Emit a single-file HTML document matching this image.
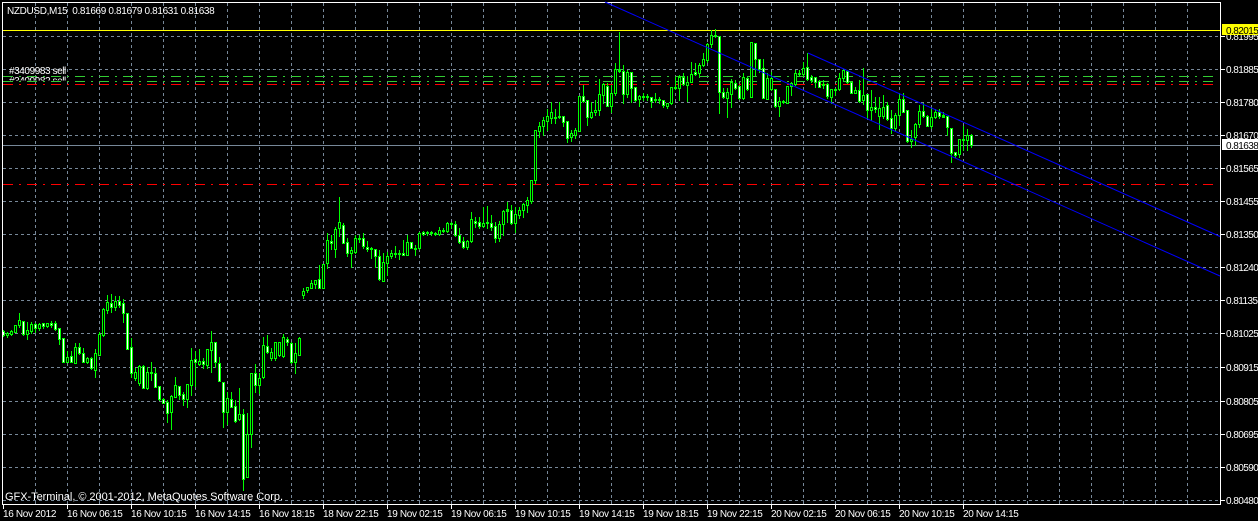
<!DOCTYPE html>
<html><head><meta charset="utf-8"><title>NZDUSD,M15</title>
<style>
html,body{margin:0;padding:0;background:#000;width:1258px;height:521px;overflow:hidden}
svg{display:block;position:absolute;left:0;top:0}
text{font-family:"Liberation Sans",sans-serif;fill:#fff;font-size:10px}
.r text,text.r{letter-spacing:-.56px}
.b text{letter-spacing:-.33px}
</style></head><body>
<svg width="1258" height="521" viewBox="0 0 1258 521" xmlns="http://www.w3.org/2000/svg">
<defs><clipPath id="c1"><rect x="0" y="76.5" width="80" height="4"/></clipPath><clipPath id="c2"><rect x="1222" y="35" width="36" height="8"/></clipPath></defs>
<rect width="1258" height="521" fill="#000"/>
<g shape-rendering="crispEdges" fill="none">
<path stroke="#778899" stroke-dasharray="3 3" d="M35.5 3V504M67.5 3V504M99.5 3V504M131.5 3V504M163.5 3V504M195.5 3V504M227.5 3V504M259.5 3V504M291.5 3V504M323.5 3V504M355.5 3V504M387.5 3V504M419.5 3V504M451.5 3V504M483.5 3V504M515.5 3V504M547.5 3V504M579.5 3V504M611.5 3V504M643.5 3V504M675.5 3V504M707.5 3V504M739.5 3V504M771.5 3V504M803.5 3V504M835.5 3V504M867.5 3V504M899.5 3V504M931.5 3V504M963.5 3V504M995.5 3V504M1027.5 3V504M1059.5 3V504M1091.5 3V504M1123.5 3V504M1155.5 3V504M1187.5 3V504"/>
<path stroke="#778899" stroke-dasharray="3 3" d="M3 36.5H1220M3 69.5H1220M3 102.5H1220M3 135.5H1220M3 168.5H1220M3 201.5H1220M3 234.5H1220M3 267.5H1220M3 300.5H1220M3 333.5H1220M3 367.5H1220M3 401.5H1220M3 434.5H1220M3 467.5H1220M3 500.5H1220"/>
<path stroke="#32cd32" stroke-dasharray="10 6 2 6" d="M3 76.5H1214M3 81.5H1214"/>
<path stroke="#ff0000" stroke-dasharray="10 6 2 6" d="M3 84.5H1214M3 184.5H1214"/>
<path stroke="#778899" d="M3 145.5H1220"/>
<path stroke="#ffff00" d="M3 30.5H1220"/>
<path stroke="#00ff00" d="M3.5 330V337M7.5 332V338M11.5 330V336M15.5 325V333M19.5 313V328M23.5 321V336M27.5 322V340M31.5 322V334M35.5 323V333M39.5 323V331M43.5 323V329M47.5 323V328M51.5 321V328M55.5 321V331M59.5 328V345M63.5 338V363M67.5 351V363M71.5 351V363M75.5 343V364M79.5 343V355M83.5 348V363M87.5 357V364M91.5 357V370M95.5 349V378M99.5 332V356M103.5 308V337M107.5 295V314M111.5 294V313M115.5 296V311M119.5 296V308M123.5 299V323M127.5 313V350M131.5 338V378M135.5 368V381M139.5 365V386M143.5 365V389M147.5 367V390M151.5 362V381M155.5 368V388M159.5 386V401M163.5 398V404M167.5 400V423M171.5 395V430M175.5 377V398M179.5 386V400M183.5 392V406M187.5 384V408M191.5 348V396M195.5 351V387M199.5 349V366M203.5 358V369M207.5 349V369M211.5 331V373M215.5 342V368M219.5 357V382M223.5 382V428M227.5 392V425M231.5 392V408M235.5 400V423M239.5 388V421M243.5 409V491M247.5 413V478M251.5 373V448M255.5 364V393M259.5 373V394M263.5 337V379M267.5 335V354M271.5 348V361M275.5 342V361M279.5 342V357M283.5 334V358M287.5 337V346M291.5 342V364M295.5 343V374M299.5 337V356M303.5 288V299M307.5 287V293M311.5 280V289M315.5 280V289M319.5 265V289M323.5 264V289M327.5 233V269M331.5 235V250M335.5 227V258M339.5 197V237M343.5 223V244M347.5 238V257M351.5 247V268M355.5 235V254M359.5 235V243M363.5 233V249M367.5 241V252M371.5 247V259M375.5 249V268M379.5 250V281M383.5 253V282M387.5 252V276M391.5 250V259M395.5 246V258M399.5 250V260M403.5 240V256M407.5 235V256M411.5 242V249M415.5 245V256M419.5 232V250M423.5 231V236M427.5 231V236M431.5 231V236M435.5 232V236M439.5 227V236M443.5 228V233M447.5 222V233M451.5 222V229M455.5 221V237M459.5 228V244M463.5 237V249M467.5 240V250M471.5 212V243M475.5 217V228M479.5 217V229M483.5 207V228M487.5 206V229M491.5 215V231M495.5 222V243M499.5 221V242M503.5 210V236M507.5 202V223M511.5 205V225M515.5 207V233M519.5 207V219M523.5 203V218M527.5 197V213M531.5 180V204M535.5 130V184M539.5 122V138M543.5 117V136M547.5 109V131M551.5 102V124M555.5 109V124M559.5 102V119M563.5 116V127M567.5 121V143M571.5 130V142M575.5 128V139M579.5 96V132M583.5 85V103M587.5 100V126M591.5 102V119M595.5 100V116M599.5 79V116M603.5 83V104M607.5 83V107M611.5 85V113M615.5 63V96M619.5 32V73M623.5 65V104M627.5 70V98M631.5 72V103M635.5 87V102M639.5 95V107M643.5 93V101M647.5 94V101M651.5 97V108M655.5 93V103M659.5 97V104M663.5 100V108M667.5 103V109M671.5 87V105M675.5 77V90M679.5 75V101M683.5 73V86M687.5 76V102M691.5 62V83M695.5 63V76M699.5 63V78M703.5 53V67M707.5 43V63M711.5 30V48M715.5 29V38M719.5 36V114M723.5 88V99M727.5 88V118M731.5 79V108M735.5 80V90M739.5 85V100M743.5 73V100M747.5 77V91M751.5 42V98M755.5 43V76M759.5 59V73M763.5 59V99M767.5 73V100M771.5 72V91M775.5 89V108M779.5 97V117M783.5 100V104M787.5 86V104M791.5 82V96M795.5 70V86M799.5 70V77M803.5 62V76M807.5 53V81M811.5 75V83M815.5 77V88M819.5 80V88M823.5 80V89M827.5 83V99M831.5 89V104M835.5 88V96M839.5 73V91M843.5 69V81M847.5 70V84M851.5 82V94M855.5 87V94M859.5 80V103M863.5 68V105M867.5 94V119M871.5 90V121M875.5 97V113M879.5 97V130M883.5 95V119M887.5 102V121M891.5 110V134M895.5 113V131M899.5 93V126M903.5 93V113M907.5 110V143M911.5 130V148M915.5 123V146M919.5 105V128M923.5 103V118M927.5 115V127M931.5 108V129M935.5 109V119M939.5 109V119M943.5 112V118M947.5 116V136M951.5 128V163M955.5 152V158M959.5 139V158M963.5 126V151M967.5 129V151M971.5 134V148"/>
<path stroke="#00ff00" stroke-width="3" d="M3.5 331V336M7.5 333V336M11.5 331V335M15.5 325V333M19.5 320V326M23.5 321V335M27.5 330V335M31.5 324V332M35.5 324V329M39.5 324V329M43.5 323V327M47.5 323V327M51.5 323V326M55.5 323V330M59.5 328V340M63.5 338V363M67.5 357V363M71.5 356V363M75.5 347V364M79.5 347V354M83.5 353V363M87.5 358V363M91.5 358V369M95.5 353V371M99.5 334V356M103.5 309V336M107.5 302V311M111.5 303V308M115.5 301V308M119.5 301V306M123.5 303V314M127.5 313V350M131.5 347V374M135.5 372V379M139.5 366V384M143.5 366V389M147.5 372V389M151.5 372V374M155.5 373V388M159.5 386V400M163.5 399V404M167.5 402V414M171.5 396V413M175.5 385V398M179.5 386V396M183.5 394V400M187.5 384V400M191.5 360V386M195.5 359V363M199.5 361V365M203.5 361V365M207.5 349V366M211.5 342V351M215.5 342V363M219.5 363V382M223.5 382V413M227.5 398V413M231.5 399V408M235.5 406V422M239.5 414V420M243.5 414V480M247.5 434V478M251.5 373V435M255.5 373V386M259.5 378V386M263.5 345V378M267.5 346V353M271.5 352V359M275.5 342V359M279.5 342V356M283.5 337V357M287.5 339V343M291.5 343V363M295.5 353V363M299.5 338V356M303.5 291V296M307.5 287V291M311.5 283V289M315.5 280V285M319.5 279V289M323.5 264V289M327.5 240V264M331.5 241V244M335.5 229V250M339.5 222V229M343.5 225V244M347.5 242V254M351.5 250V254M355.5 238V253M359.5 238V240M363.5 238V247M367.5 247V250M371.5 248V250M375.5 249V257M379.5 256V280M383.5 262V282M387.5 256V264M391.5 253V257M395.5 253V255M399.5 253V255M403.5 253V256M407.5 242V256M411.5 242V249M415.5 248V250M419.5 233V249M423.5 232V235M427.5 232V234M431.5 232V234M435.5 233V235M439.5 230V235M443.5 230V232M447.5 223V232M451.5 223V225M455.5 224V236M459.5 235V243M463.5 241V248M467.5 241V248M471.5 219V242M475.5 221V224M479.5 222V227M483.5 223V227M487.5 222V224M491.5 223V228M495.5 226V239M499.5 224V239M503.5 211V225M507.5 209V212M511.5 210V224M515.5 214V224M519.5 210V216M523.5 204V211M527.5 200V206M531.5 180V202M535.5 130V181M539.5 126V132M543.5 120V127M547.5 116V122M551.5 112V119M555.5 117V119M559.5 116V118M563.5 116V123M567.5 121V139M571.5 133V138M575.5 130V136M579.5 96V132M583.5 96V102M587.5 100V118M591.5 112V118M595.5 110V113M599.5 94V111M603.5 84V96M607.5 86V107M611.5 93V107M615.5 69V94M619.5 69V72M623.5 71V95M627.5 72V95M631.5 72V89M635.5 87V101M639.5 96V100M643.5 96V98M647.5 96V98M651.5 97V102M655.5 99V101M659.5 99V101M663.5 100V106M667.5 103V107M671.5 87V104M675.5 87V89M679.5 77V89M683.5 77V85M687.5 82V86M691.5 74V83M695.5 72V75M699.5 65V74M703.5 59V66M707.5 44V61M711.5 35V45M715.5 35V37M719.5 36V93M723.5 92V98M727.5 92V99M731.5 82V95M735.5 83V89M739.5 86V99M743.5 77V99M747.5 78V90M751.5 42V98M755.5 43V60M759.5 59V70M763.5 68V99M767.5 78V100M771.5 78V90M775.5 89V107M779.5 101V107M783.5 101V103M787.5 86V104M791.5 83V87M795.5 73V85M799.5 73V75M803.5 68V75M807.5 67V80M811.5 77V81M815.5 77V83M819.5 81V88M823.5 84V86M827.5 84V97M831.5 89V98M835.5 89V91M839.5 78V90M843.5 70V79M847.5 71V83M851.5 82V94M855.5 90V94M859.5 90V102M863.5 95V101M867.5 94V111M871.5 107V111M875.5 107V110M879.5 108V117M883.5 107V117M887.5 105V120M891.5 118V129M895.5 115V129M899.5 99V116M903.5 99V113M907.5 110V142M911.5 139V142M915.5 124V138M919.5 111V125M923.5 111V117M927.5 116V127M931.5 117V127M935.5 112V118M939.5 112V117M943.5 115V118M947.5 116V128M951.5 128V154M955.5 152V156M959.5 139V155M963.5 139V141M967.5 135V141M971.5 135V146"/>
<path stroke="#ffffff" d="M3.5 332V335M23.5 322V334M35.5 325V328M43.5 324V326M51.5 324V325M55.5 324V329M59.5 329V339M63.5 339V362M71.5 357V362M79.5 348V353M83.5 354V362M91.5 359V368M111.5 304V307M119.5 302V305M123.5 304V313M127.5 314V349M131.5 348V373M143.5 367V388M155.5 374V387M159.5 387V399M163.5 400V403M167.5 403V413M179.5 387V395M183.5 395V399M195.5 360V362M203.5 362V364M215.5 343V362M219.5 364V381M223.5 383V412M231.5 400V407M235.5 407V421M243.5 415V479M255.5 374V385M267.5 347V352M287.5 340V342M291.5 344V362M319.5 280V288M331.5 242V243M343.5 226V243M347.5 243V253M363.5 239V246M367.5 248V249M375.5 250V256M379.5 257V279M403.5 254V255M411.5 243V248M423.5 233V234M455.5 225V235M459.5 236V242M463.5 242V247M475.5 222V223M479.5 223V226M491.5 224V227M495.5 227V238M511.5 211V223M563.5 117V122M567.5 122V138M583.5 97V101M587.5 101V117M607.5 87V106M623.5 72V94M631.5 73V88M635.5 88V100M651.5 98V101M663.5 101V105M683.5 78V84M695.5 73V74M719.5 37V92M723.5 93V97M735.5 84V88M739.5 87V98M747.5 79V89M755.5 44V59M759.5 60V69M763.5 69V98M775.5 90V106M807.5 68V79M811.5 78V80M815.5 78V82M819.5 82V87M827.5 85V96M847.5 72V82M851.5 83V93M859.5 91V101M867.5 95V110M875.5 108V109M887.5 106V119M891.5 119V128M903.5 100V112M907.5 111V141M923.5 112V116M927.5 117V126M939.5 113V116M947.5 117V127M951.5 129V153M955.5 153V155M971.5 136V145"/>
<path stroke="#000000" d="M7.5 334V335M11.5 332V334M15.5 326V332M19.5 321V325M27.5 331V334M31.5 325V331M39.5 325V328M47.5 324V326M67.5 358V362M75.5 348V363M87.5 359V362M95.5 354V370M99.5 335V355M103.5 310V335M107.5 303V310M115.5 302V307M135.5 373V378M139.5 367V383M147.5 373V388M171.5 397V412M175.5 386V397M187.5 385V399M191.5 361V385M199.5 362V364M207.5 350V365M211.5 343V350M227.5 399V412M239.5 415V419M247.5 435V477M251.5 374V434M259.5 379V385M263.5 346V377M271.5 353V358M275.5 343V358M279.5 343V355M283.5 338V356M295.5 354V362M299.5 339V355M303.5 292V295M307.5 288V290M311.5 284V288M315.5 281V284M323.5 265V288M327.5 241V263M335.5 230V249M339.5 223V228M351.5 251V253M355.5 239V252M383.5 263V281M387.5 257V263M391.5 254V256M407.5 243V255M419.5 234V248M439.5 231V234M447.5 224V231M467.5 242V247M471.5 220V241M483.5 224V226M499.5 225V238M503.5 212V224M515.5 215V223M519.5 211V215M523.5 205V210M527.5 201V205M531.5 181V201M535.5 131V180M539.5 127V131M543.5 121V126M547.5 117V121M551.5 113V118M571.5 134V137M575.5 131V135M579.5 97V131M591.5 113V117M595.5 111V112M599.5 95V110M603.5 85V95M611.5 94V106M615.5 70V93M627.5 73V94M639.5 97V99M667.5 104V106M671.5 88V103M679.5 78V88M687.5 83V85M691.5 75V82M699.5 66V73M703.5 60V65M707.5 45V60M711.5 36V44M727.5 93V98M731.5 83V94M743.5 78V98M751.5 43V97M767.5 79V99M771.5 79V89M779.5 102V106M787.5 87V103M791.5 84V86M795.5 74V84M803.5 69V74M831.5 90V97M839.5 79V89M843.5 71V78M855.5 91V93M863.5 96V100M871.5 108V110M879.5 109V116M883.5 108V116M895.5 116V128M899.5 100V115M911.5 140V141M915.5 125V137M919.5 112V124M931.5 118V126M935.5 113V117M959.5 140V154M967.5 136V140"/>
<path stroke="#ffffff" d="M2.5 2V505M1220.5 2V505M2 2.5H1221M2 504.5H1221"/>
<path stroke="#ffffff" d="M1221 36.5H1225M1221 69.5H1225M1221 102.5H1225M1221 135.5H1225M1221 168.5H1225M1221 201.5H1225M1221 234.5H1225M1221 267.5H1225M1221 300.5H1225M1221 333.5H1225M1221 367.5H1225M1221 401.5H1225M1221 434.5H1225M1221 467.5H1225M1221 500.5H1225"/>
<path stroke="#ffffff" d="M3.5 505V509M67.5 505V509M131.5 505V509M195.5 505V509M259.5 505V509M323.5 505V509M387.5 505V509M451.5 505V509M515.5 505V509M579.5 505V509M643.5 505V509M707.5 505V509M771.5 505V509M835.5 505V509M899.5 505V509M963.5 505V509"/>
</g>
<path fill="none" stroke="#0000ff" d="M605 2L1220 276M808 53L1220 236.5"/>
<text x="7" y="14" xml:space="preserve" style="letter-spacing:-.35px">NZDUSD,M15  0.81669 0.81679 0.81631 0.81638</text>
<text x="9" y="74" style="letter-spacing:-.42px">#3409983 sell</text>
<text x="9" y="84" clip-path="url(#c1)" style="letter-spacing:-.42px">#3409982 sell</text>
<text x="5" y="500" style="font-size:11px" textLength="278">GFX-Terminal, © 2001-2012, MetaQuotes Software Corp.</text>
<g class="r">
<text x="1226" y="40" clip-path="url(#c2)">0.81995</text>
<text x="1226" y="73">0.81885</text>
<text x="1226" y="106">0.81780</text>
<text x="1226" y="139">0.81670</text>
<text x="1226" y="172">0.81565</text>
<text x="1226" y="205">0.81455</text>
<text x="1226" y="238">0.81350</text>
<text x="1226" y="271">0.81240</text>
<text x="1226" y="304">0.81135</text>
<text x="1226" y="337">0.81025</text>
<text x="1226" y="371">0.80915</text>
<text x="1226" y="405">0.80805</text>
<text x="1226" y="438">0.80695</text>
<text x="1226" y="471">0.80590</text>
<text x="1226" y="504">0.80480</text>
</g>
<rect x="1222" y="24" width="36" height="11" fill="#ffff00"/>
<text class="r" x="1226" y="34" style="fill:#000">0.82015</text>
<rect x="1222" y="139" width="36" height="11" fill="#ffffff"/>
<text class="r" x="1226" y="149" style="fill:#000">0.81638</text>
<g class="b">
<text x="3" y="517">16 Nov 2012</text>
<text x="67" y="517">16 Nov 06:15</text>
<text x="131" y="517">16 Nov 10:15</text>
<text x="195" y="517">16 Nov 14:15</text>
<text x="259" y="517">16 Nov 18:15</text>
<text x="323" y="517">18 Nov 22:15</text>
<text x="387" y="517">19 Nov 02:15</text>
<text x="451" y="517">19 Nov 06:15</text>
<text x="515" y="517">19 Nov 10:15</text>
<text x="579" y="517">19 Nov 14:15</text>
<text x="643" y="517">19 Nov 18:15</text>
<text x="707" y="517">19 Nov 22:15</text>
<text x="771" y="517">20 Nov 02:15</text>
<text x="835" y="517">20 Nov 06:15</text>
<text x="899" y="517">20 Nov 10:15</text>
<text x="963" y="517">20 Nov 14:15</text>
</g>
</svg>
</body></html>
